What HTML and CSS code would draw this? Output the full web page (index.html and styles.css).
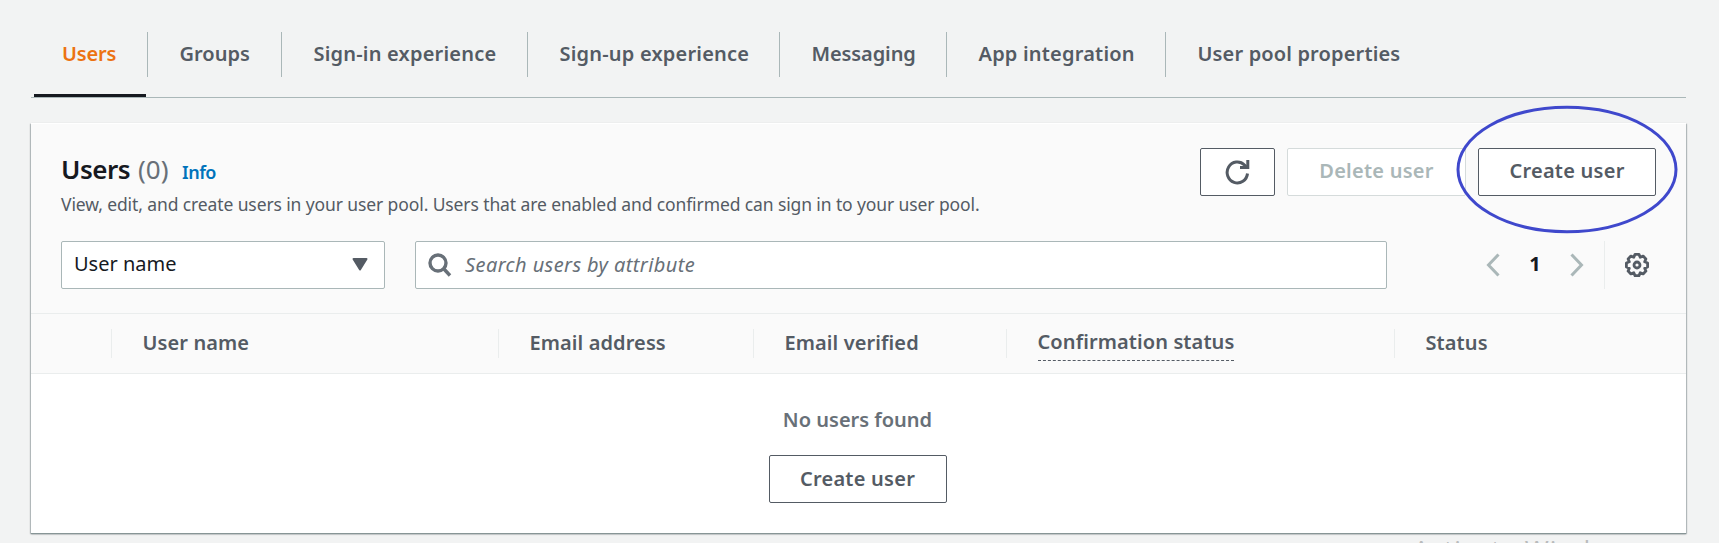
FILE: index.html
```html
<!DOCTYPE html>
<html lang="en">
<head>
<meta charset="utf-8">
<title>Users</title>
<link rel="stylesheet" href="styles.css">
</head>
<body>
<main class="page">
  <nav class="tabs">
    <a class="tab tab-users active"><span>Users</span></a>
    <a class="tab tab-groups"><span>Groups</span></a>
    <a class="tab tab-signin"><span>Sign-in experience</span></a>
    <a class="tab tab-signup"><span>Sign-up experience</span></a>
    <a class="tab tab-messaging"><span>Messaging</span></a>
    <a class="tab tab-app"><span>App integration</span></a>
    <a class="tab tab-props"><span>User pool properties</span></a>
  </nav>

  <section class="card">
    <header class="card-header">
      <div class="title-row">
        <div class="heading">
          <h2><b>Users</b> <span class="count">(0)</span> <a class="info">Info</a></h2>
          <p class="desc">View, edit, and create users in your user pool. Users that are enabled and confirmed can sign in to your user pool.</p>
        </div>
        <div class="actions">
          <button class="btn btn-icon" aria-label="Refresh">
            <svg width="25" height="26" viewBox="0 0 25 26" fill="none" stroke="#545b64" stroke-width="3"><path d="M22.500 14.500A10.200 10.500 0 1 1 19.500 6L21.500 8"/><path d="M22.800 1V8.500H15"/></svg>
          </button>
          <button class="btn btn-delete" disabled>Delete user</button>
          <span class="create-wrap">
            <button class="btn btn-create">Create user</button>
            <svg class="ring" width="222" height="129" viewBox="0 0 222 129"><ellipse cx="111" cy="64.500" rx="109" ry="62.200" fill="none" stroke="#3f48cc" stroke-width="3"/></svg>
          </span>
        </div>
      </div>
      <div class="filter-row">
        <div class="select"><span>User name</span><svg width="16" height="13" viewBox="0 0 16 13"><path d="M1.500 1H14.500L8 11.500Z" fill="#545b64" stroke="#545b64" stroke-width="2" stroke-linejoin="round"/></svg></div>
        <div class="search"><svg width="24" height="24" viewBox="0 0 24 24" fill="none" stroke="#687078" stroke-width="3.400"><circle cx="10" cy="10" r="8"/><path d="M15.500 15.500L22 22.500"/></svg><span>Search users by attribute</span></div>
        <div class="pager">
          <svg width="14" height="24" viewBox="0 0 14 24" fill="none" stroke="#aab7b8" stroke-width="3"><path d="M12.500 1.500L2.500 12L12.500 22.500"/></svg>
          <span class="page-no">1</span>
          <svg width="14" height="24" viewBox="0 0 14 24" fill="none" stroke="#aab7b8" stroke-width="3"><path d="M1.500 1.500L11.500 12L1.500 22.500"/></svg>
          <span class="gear">
            <svg width="26" height="26" viewBox="-13 -13 26 26" fill="none" stroke="#545b64" stroke-width="2.800" stroke-linejoin="round"><path d="M-2 -10.600H2L3.200 -7.700L6.100 -8.900L8.900 -6.100L7.700 -3.200L10.600 -2V2L7.700 3.200L8.900 6.100L6.100 8.900L3.200 7.700L2 10.600H-2L-3.200 7.700L-6.100 8.900L-8.900 6.100L-7.700 3.200L-10.600 2V-2L-7.700 -3.200L-8.900 -6.100L-6.100 -8.900L-3.200 -7.700Z"/><circle r="3"/></svg>
          </span>
        </div>
      </div>
    </header>

    <div class="columns">
      <div class="col"></div>
      <div class="col"><span>User name</span></div>
      <div class="col"><span>Email address</span></div>
      <div class="col"><span>Email verified</span></div>
      <div class="col"><span class="dashed">Confirmation status</span></div>
      <div class="col"><span>Status</span></div>
    </div>

    <div class="empty">
      <p>No users found</p>
      <button class="btn btn-create">Create user</button>
    </div>
  </section>
  <div class="watermark">Activate Windows</div>
</main>
</body>
</html>
```
FILE: styles.css
```css
* { box-sizing: border-box; }
body {
  margin: 0;
  background: #f2f3f3;
  color: #16191f;
  font: 400 20px/28px "Noto Sans", "Open Sans", sans-serif;
}
h2, p { margin: 0; }
.page { height: 543px; padding: 32px 33px 0 31px; overflow: hidden; }

.tabs {
  display: flex;
  height: 66px;
  padding-left: 3px;
  border-bottom: 1px solid #aab7b8;
}
.tab { height: 65px; color: #545b64; font-weight: 600; white-space: nowrap; }
.tab span { display: block; height: 45px; padding: 8px 0 0 31.5px; border-right: 1px solid #aab7b8; }
.tab:first-child span { padding-left: 28px; margin-right: -2px; }
.tab:last-child span { border-right: 0; }
.tab.active { color: #ec7211; border-bottom: 3px solid #16191f; }
.tab-users { width: 112px; margin-right: 2px; letter-spacing: -0.2px; }
.tab-groups { width: 134px; }
.tab-signin { width: 246px; letter-spacing: 0.2px; }
.tab-signup { width: 252px; letter-spacing: 0.2px; }
.tab-messaging { width: 167px; letter-spacing: -0.1px; }
.tab-app { width: 219px; letter-spacing: 0.2px; }
.tab-props { width: 240px; letter-spacing: 0.15px; }

.card {
  height: 410px;
  margin-top: 25px;
  background: #fff;
  border-top: 1px solid #fff;
  box-shadow: 0 1px 1px #879596, 0 1px 2px rgba(0, 28, 36, .3), 1px 1px 1px rgba(0, 28, 36, .15), -1px 1px 1px rgba(0, 28, 36, .15);
}
.card-header { height: 190px; background: #fafafa; border-bottom: 1px solid #eaeded; padding: 24px 30px 0 30px; }
.title-row { display: flex; justify-content: space-between; height: 93px; }
.heading { padding-top: 3px; }
h2 { display: flex; align-items: baseline; font-size: 26px; line-height: 36px; font-weight: 400; }
h2 b { font-weight: 600; letter-spacing: -0.5px; width: 77px; }
.count { color: #687078; width: 44px; }
.info { color: #0073bb; font-size: 18px; font-weight: 600; letter-spacing: -0.5px; }
.desc { color: #545b64; font-size: 17.5px; line-height: 28px; letter-spacing: -0.11px; }

.actions { display: flex; }
.btn {
  display: flex;
  align-items: center;
  justify-content: center;
  height: 48px;
  padding: 0 0 2px;
  border: 1px solid #545b64;
  border-radius: 2px;
  background: #fff;
  color: #545b64;
  font: 600 20px/28px "Noto Sans", "Open Sans", sans-serif;
  letter-spacing: 0.25px;
}
.btn-icon { width: 75px; margin-right: 12px; padding: 0; }
.btn-delete { width: 179px; margin-right: 12px; border-color: #d5dbdb; color: #aab7b8; }
.btn-create { width: 178px; }
.create-wrap { position: relative; }
.ring { position: absolute; left: -22px; top: -43px; }

.filter-row { display: flex; }
.select, .search { display: flex; align-items: center; height: 48px; border: 1px solid #aab7b8; border-radius: 2px; background: #fff; }
.select { width: 324px; justify-content: space-between; padding: 0 16px 2px 12px; margin-right: 30px; }
.search { width: 972px; padding: 0 12px; gap: 13px; color: #687078; font-style: italic; letter-spacing: 0.4px; }
.pager { display: flex; align-items: center; margin-left: 99px; }
.page-no { width: 70px; margin: -3px 0 0; text-align: center; font-weight: 700; }
.gear { display: flex; align-items: center; height: 48px; margin-left: 20px; padding-left: 19px; border-left: 1px solid #eaeded; }

.columns {
  display: grid;
  grid-template-columns: 81px 387px 255px 253px 388px 1fr;
  align-items: center;
  height: 60px;
  background: #fafafa;
  border-bottom: 1px solid #eaeded;
  color: #545b64;
  font-weight: 600;
}
.col { height: 29px; padding-left: 30.5px; border-right: 1px solid #eaeded; white-space: nowrap; line-height: 28px; letter-spacing: 0.1px; }
.col:last-child { border-right: 0; }
.dashed { display: inline-block; height: 33px; margin-top: -1px; position: relative; top: -1px; border-bottom: 1px dashed #545b64; }

.empty { display: flex; flex-direction: column; align-items: center; padding: 32px 2px 0 0; }
.empty p { color: #687078; font-weight: 600; margin-bottom: 21px; }
.empty .btn { padding-bottom: 1px; }

.watermark { margin: -2px 0 0 1382px; color: #b9bbbc; font: 400 26px/36px "Open Sans", "Noto Sans", sans-serif; letter-spacing: 1px; white-space: nowrap; }
```
